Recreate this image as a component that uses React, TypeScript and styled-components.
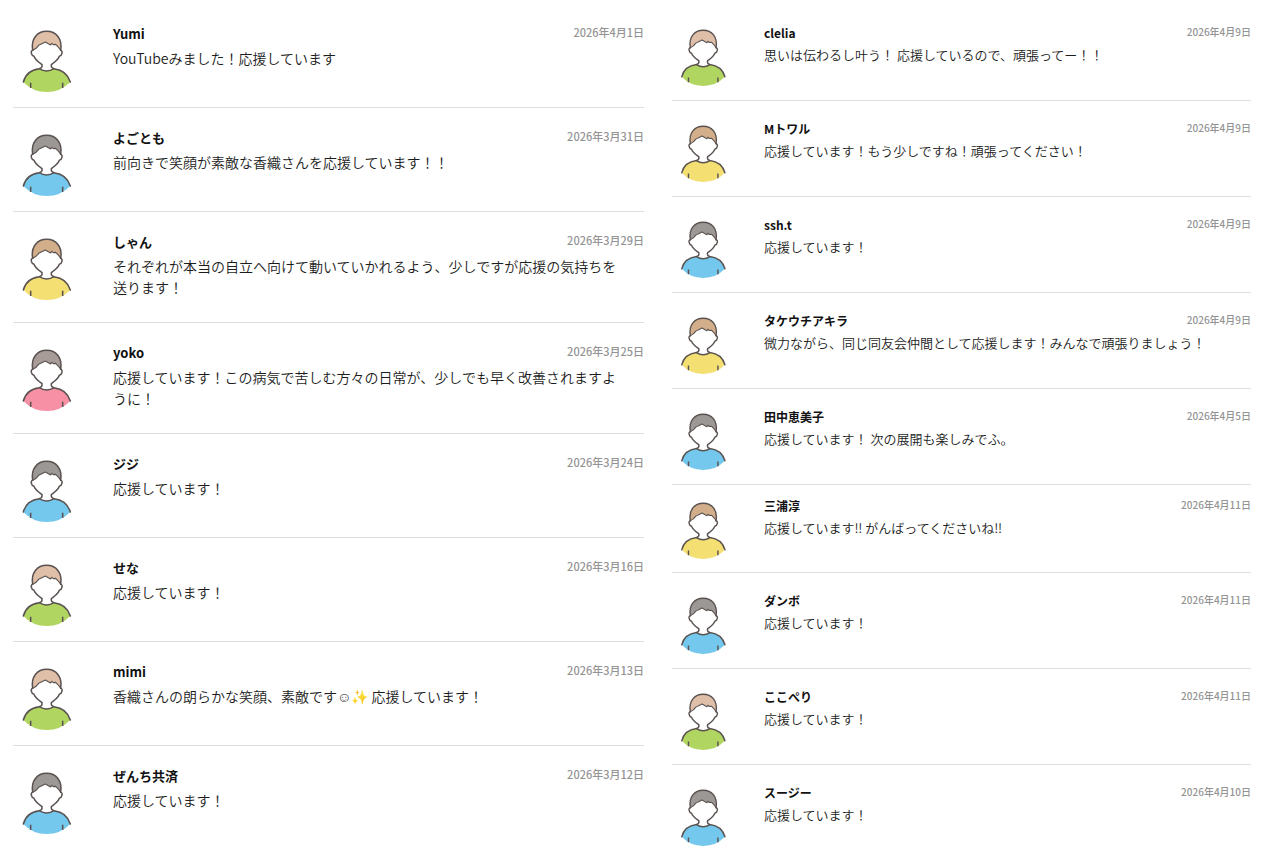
import React from "react";
import styled, { createGlobalStyle, css } from "styled-components";

const GlobalStyle = createGlobalStyle`
  * { box-sizing: border-box; }
  body {
    margin: 0;
    background: #fff;
    color: #1c1c1c;
    font-family: "Noto Sans CJK JP", "Noto Sans", sans-serif;
  }
`;

type Size = "large" | "small";

const Page = styled.main`
  display: grid;
  grid-template-columns: 631fr 579fr;
  gap: 28px;
  align-items: start;
  padding: 4px 29px 0 13px;
`;

const Column = styled.section<{ $size: Size }>`
  min-width: 0;
  padding-top: ${(p) => (p.$size === "large" ? 0 : 1)}px;
`;

const List = styled.ul`
  list-style: none;
  margin: 0;
  padding: 0;
`;

const AvatarBox = styled.div<{ $size: Size }>`
  flex: none;
  ${(p) =>
    p.$size === "large"
      ? css`
          width: 62px;
          height: 62px;
          margin: 26px 35px 15px 3px;
        `
      : css`
          width: 57px;
          height: 57px;
          margin: 24px 32px 14px 3px;
        `}
  svg {
    display: block;
    width: 100%;
    height: 100%;
  }
`;

const Body = styled.div<{ $size: Size }>`
  flex: 1;
  min-width: 0;
  padding: ${(p) => (p.$size === "large" ? "20px 0 24px" : "19px 0 20px")};
`;

const Row = styled.li<{ $compact?: boolean }>`
  display: flex;
  align-items: flex-start;
  border-bottom: 1px solid #dedede;

  ${(p) =>
    p.$compact &&
    css`
      ${AvatarBox} {
        margin-top: 17px;
        margin-bottom: 13px;
      }
      ${Body} {
        padding-top: 12px;
      }
    `}
`;

const LastRow = styled(Row)`
  border-bottom: 0;
  ${AvatarBox} {
    margin-bottom: 0;
  }
`;

const Head = styled.div<{ $size: Size }>`
  display: flex;
  justify-content: space-between;
  align-items: flex-start;
  margin-bottom: ${(p) => (p.$size === "large" ? 4 : 3)}px;
`;

const Name = styled.h3<{ $size: Size }>`
  margin: 0;
  color: #111;
  font-weight: 700;
  font-size: ${(p) => (p.$size === "large" ? 13 : 12)}px;
  line-height: ${(p) => (p.$size === "large" ? 20 : 18)}px;
`;

const PostedOn = styled.time<{ $size: Size }>`
  color: #949494;
  font-weight: 500;
  font-size: ${(p) => (p.$size === "large" ? 11 : 10)}px;
  line-height: 16px;
`;

const Message = styled.p<{ $size: Size }>`
  margin: 0;
  font-weight: 350;
  font-size: ${(p) => (p.$size === "large" ? 14 : 13)}px;
  line-height: ${(p) => (p.$size === "large" ? 21 : 20)}px;
  padding-right: ${(p) => (p.$size === "large" ? 20 : 0)}px;
`;

const palettes = {
  green: { hair: "#dfbfa7", shirt: "#b1d561" },
  blue: { hair: "#9c9896", shirt: "#74c7ed" },
  yellow: { hair: "#d3ae8b", shirt: "#f3df72" },
  pink: { hair: "#a89c98", shirt: "#f78fa5" },
};
type Palette = keyof typeof palettes;

function Avatar({ palette }: { palette: Palette }) {
  const { hair, shirt } = palettes[palette];
  return (
    <svg viewBox="0 0 186 186" aria-hidden="true">
      <path
        d="M22 156 C28 132 46 119 70 116 Q92 130 114 116 C138 119 156 132 163 156 Q134 186 92 186 Q50 186 22 156Z"
        fill={shirt}
      />
      <path
        d="M50 61 C44 26 64 4 92 4 C120 4 140 26 134 61 C130 53 125 49 119 43 L112 44 L107 40 L104 45 L97 41 L88 36 L82 39 L68 46 C63 53 58 58 50 61Z"
        fill={hair}
      />
      <g fill="none" stroke="#5a5250" strokeWidth="4.6" strokeLinecap="round" strokeLinejoin="round">
        <path d="M50 61 C44 26 64 4 92 4 C120 4 140 26 134 61" />
        <path
          d="M50 61 C58 58 63 53 68 46 L82 39 L88 36 L97 41 L104 45 L107 40 L112 44 L119 43 C125 49 130 53 134 61"
          strokeWidth="3.4"
        />
        <path d="M50 61 C43 62 45 77 54 79 C58 90 67 96 78 104 C79 111 76 115 70 116 C46 119 28 132 22 156" />
        <path d="M134 61 C141 62 139 77 130 79 C126 90 117 96 106 104 C105 111 108 115 114 116 C138 119 156 132 163 156" />
        <path d="M70 116 Q92 130 114 116" />
        <path d="M44 158 V174 M140 158 V174" strokeLinecap="butt" />
      </g>
    </svg>
  );
}

interface Comment {
  name: string;
  date: string;
  text: string;
  palette: Palette;
}

const earlier: Comment[] = [
  { name: "Yumi", date: "2026年4月1日", text: "YouTubeみました！応援しています", palette: "green" },
  { name: "よごとも", date: "2026年3月31日", text: "前向きで笑顔が素敵な香織さんを応援しています！！", palette: "blue" },
  { name: "しゃん", date: "2026年3月29日", text: "それぞれが本当の自立へ向けて動いていかれるよう、少しですが応援の気持ちを送ります！", palette: "yellow" },
  { name: "yoko", date: "2026年3月25日", text: "応援しています！この病気で苦しむ方々の日常が、少しでも早く改善されますように！", palette: "pink" },
  { name: "ジジ", date: "2026年3月24日", text: "応援しています！", palette: "blue" },
  { name: "せな", date: "2026年3月16日", text: "応援しています！", palette: "green" },
  { name: "mimi", date: "2026年3月13日", text: "香織さんの朗らかな笑顔、素敵です☺︎✨ 応援しています！", palette: "green" },
  { name: "ぜんち共済", date: "2026年3月12日", text: "応援しています！", palette: "blue" },
];

const april9: Comment[] = [
  { name: "clelia", date: "2026年4月9日", text: "思いは伝わるし叶う！ 応援しているので、頑張ってー！！", palette: "green" },
  { name: "Mトワル", date: "2026年4月9日", text: "応援しています！もう少しですね！頑張ってください！", palette: "yellow" },
  { name: "ssh.t", date: "2026年4月9日", text: "応援しています！", palette: "blue" },
  { name: "タケウチアキラ", date: "2026年4月9日", text: "微力ながら、同じ同友会仲間として応援します！みんなで頑張りましょう！", palette: "yellow" },
  { name: "田中恵美子", date: "2026年4月5日", text: "応援しています！ 次の展開も楽しみでふ。", palette: "blue" },
];

const april11: Comment[] = [
  { name: "三浦淳", date: "2026年4月11日", text: "応援しています‼︎ がんばってくださいね‼︎", palette: "yellow" },
  { name: "ダンボ", date: "2026年4月11日", text: "応援しています！", palette: "blue" },
  { name: "ここぺり", date: "2026年4月11日", text: "応援しています！", palette: "green" },
  { name: "スージー", date: "2026年4月10日", text: "応援しています！", palette: "blue" },
];

interface CommentsProps {
  items: Comment[];
  size: Size;
  compactFirst?: boolean;
  closing?: boolean;
}

function Comments({ items, size, compactFirst, closing }: CommentsProps) {
  return (
    <List>
      {items.map((item, i) => {
        const Item = closing && i === items.length - 1 ? LastRow : Row;
        return (
          <Item key={item.name} $compact={compactFirst && i === 0}>
            <AvatarBox $size={size}>
              <Avatar palette={item.palette} />
            </AvatarBox>
            <Body $size={size}>
              <Head $size={size}>
                <Name $size={size}>{item.name}</Name>
                <PostedOn $size={size}>{item.date}</PostedOn>
              </Head>
              <Message $size={size}>{item.text}</Message>
            </Body>
          </Item>
        );
      })}
    </List>
  );
}

export default function App() {
  return (
    <>
      <GlobalStyle />
      <Page lang="ja">
        <Column $size="large">
          <Comments items={earlier} size="large" closing />
        </Column>
        <Column $size="small">
          <Comments items={april9} size="small" />
          <Comments items={april11} size="small" compactFirst closing />
        </Column>
      </Page>
    </>
  );
}
